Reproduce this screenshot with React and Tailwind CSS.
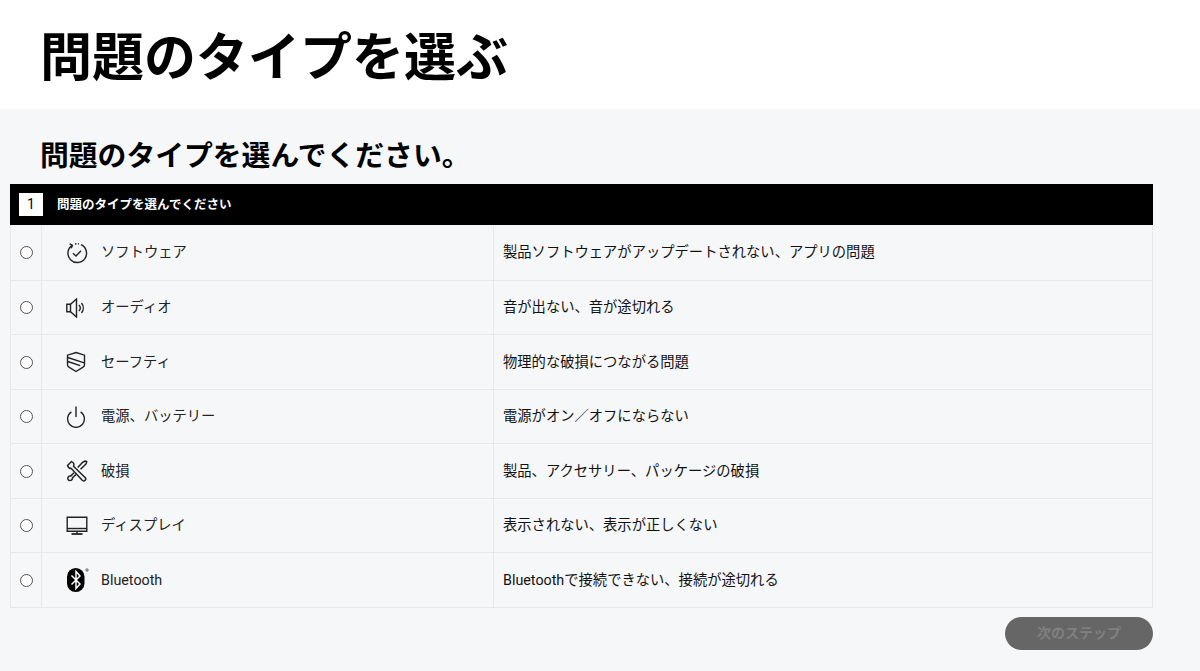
import React from 'react';

const SoftwareIcon = () => (
  <svg width="22" height="22" viewBox="0 0 22 22" fill="none" stroke="#222" strokeWidth="1.4">
    <path d="M6.200 3.400A9.300 9.300 0 1 0 15 2.700" />
    <path d="M3.600 1.800l2.800 1.500-1.200 3" />
    <path d="M9 2l1.400-.2M12 1.800l.9.200" />
    <path d="M7 11.200l3 2.800 5-5.200" />
  </svg>
);

const AudioIcon = () => (
  <svg width="20" height="20" viewBox="0 0 20 20" fill="none" stroke="#222" strokeWidth="1.4">
    <path d="M.8 6.200h3.700v7.600H.8z" />
    <path d="M4.500 6.200L10.500 1v18l-6-5.200" />
    <path d="M13 7a4.500 4.500 0 0 1 0 6" />
    <path d="M15.500 5a8 8 0 0 1 0 10" />
  </svg>
);

const SafetyIcon = () => (
  <svg width="20" height="22" viewBox="0 0 20 22" fill="none" stroke="#222" strokeWidth="1.4">
    <path d="M10 1.500l8.500 2.700v9.600c0 1-.5 1.900-1.400 2.400L10 20.500l-7.100-4.300C2 15.700 1.500 14.800 1.500 13.800V4.200z" />
    <path d="M1.800 6.500l16.400 5.300M1.800 10.500l12.400 4.200" />
  </svg>
);

const PowerIcon = () => (
  <svg width="20" height="22" viewBox="0 0 20 22" fill="none" stroke="#222" strokeWidth="1.4">
    <path d="M10 .5v10.500" />
    <path d="M5.400 5.900a8.400 8.400 0 1 0 9.200 0" />
  </svg>
);

const RepairIcon = () => (
  <svg width="22" height="22" viewBox="0 0 22 22" fill="none" stroke="#222" strokeWidth="1.500" strokeLinejoin="round">
    <path d="M1.500 5.500L5.500 1.500 7.500 3c.5 1 .5 2.200 0 3.200l11.800 11.500a2 2 0 0 1-2.800 2.800L5 8.300C3.800 8.600 2.500 8 1.500 5.500z" />
    <path d="M14.500 9.300l5.500-5.300.8-2.400-1.500-.6-2.600 1.200-5 5.300" />
    <path d="M8 12.800l-3.400 3.300a2.400 2.400 0 0 0-2.700 1.500c-.4 1.200.3 2.900 2 3 1.500.1 2.700-1.200 2.600-2.800l3.400-3.200" />
  </svg>
);

const DisplayIcon = () => (
  <svg width="22" height="20" viewBox="0 0 22 20" fill="none" stroke="#222" strokeWidth="1.400">
    <path d="M1.200 1.200h19.600v14H1.200z" />
    <path d="M1.200 12.500h19.600" />
    <path d="M11 15.200v2.500" />
    <path d="M5.500 18h11" strokeWidth="1.800" />
  </svg>
);

const BluetoothIcon = () => (
  <svg width="23" height="24" viewBox="0 0 23 24" className="ml-px">
    <rect x="0" y="0" width="17.500" height="24" rx="8.700" fill="#000" />
    <path d="M4.500 7.500l8.500 8.500-4 4.500V3.500l4 4.500-8.500 8.500" fill="none" stroke="#fff" strokeWidth="1.500" />
    <circle cx="20" cy="2" r="1.700" fill="#888" />
  </svg>
);

const rows = [
  { name: 'ソフトウェア', desc: '製品ソフトウェアがアップデートされない、アプリの問題', icon: <SoftwareIcon />, h: 'h-[56px]' },
  { name: 'オーディオ', desc: '音が出ない、音が途切れる', icon: <AudioIcon />, h: 'h-[54px]' },
  { name: 'セーフティ', desc: '物理的な破損につながる問題', icon: <SafetyIcon />, h: 'h-[55px]' },
  { name: '電源、バッテリー', desc: '電源がオン／オフにならない', icon: <PowerIcon />, h: 'h-[54px]' },
  { name: '破損', desc: '製品、アクセサリー、パッケージの破損', icon: <RepairIcon />, h: 'h-[55px]' },
  { name: 'ディスプレイ', desc: '表示されない、表示が正しくない', icon: <DisplayIcon />, h: 'h-[54px]' },
  { name: 'Bluetooth', desc: 'Bluetoothで接続できない、接続が途切れる', icon: <BluetoothIcon />, h: 'h-[55px]' },
];

export default function App() {
  return (
    <div className="h-[671px] overflow-hidden bg-[#f6f7f9] text-black font-['Roboto','Noto_Sans_CJK_JP',sans-serif]">
      <div className="h-[109px] bg-white pl-[40px] pt-[23px]">
        <h1 className="text-[52px] leading-[72px] font-bold">問題のタイプを選ぶ</h1>
      </div>

      <div className="pl-[10px] w-[1153px]">
        <h2 className="pl-[30px] pt-[27px] text-[28.800px] leading-[40px] font-bold h-[75px]">問題のタイプを選んでください。</h2>

        <div className="h-[41px] bg-black flex items-center pl-[9px]">
          <div className="w-[24px] h-[23px] bg-white flex items-center justify-center text-[14px]">1</div>
          <span className="ml-[14px] pt-[2px] text-white text-[12.500px] font-bold">問題のタイプを選んでください</span>
        </div>

        <div className="border-l border-r border-[#e8e8e8]">
          {rows.map((row) => (
            <div key={row.name} className={'flex items-center border-b border-[#e8e8e8] ' + row.h}>
              <div className="w-[31px] h-full flex items-center justify-center border-r border-[#e8e8e8] shrink-0">
                <input type="radio" name="problem" className="appearance-none w-[13px] h-[13px] rounded-full border-[1.500px] border-[#555] bg-white" />
              </div>
              <div className="w-[452px] h-full flex items-center border-r border-[#e8e8e8] shrink-0">
                <div className="w-[59px] pl-[24px] flex items-center shrink-0">{row.icon}</div>
                <span className="pt-px text-[14.300px] text-[#222]">{row.name}</span>
              </div>
              <div className="pl-[9px] pt-px text-[14.300px] text-[#111]">{row.desc}</div>
            </div>
          ))}
        </div>

        <div className="flex justify-end pt-[9px]">
          <button className="w-[148px] h-[33px] rounded-full bg-[#666666] text-[#808080] text-[14px] font-bold">次のステップ</button>
        </div>
      </div>
    </div>
  );
}
